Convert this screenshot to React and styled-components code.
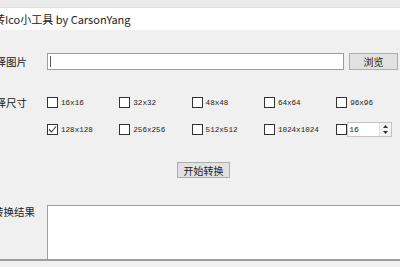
import React from "react";
import styled, { createGlobalStyle } from "styled-components";

const CJK = `"Noto Sans CJK SC", "Noto Sans", sans-serif`;

const GlobalStyle = createGlobalStyle`
  html, body {
    margin: 0;
    padding: 0;
    background: #f0f0f0;
    overflow: hidden;
  }
`;

const Window = styled.div`
  width: 400px;
  height: 267px;
  overflow: hidden;
  display: flex;
  flex-direction: column;
  background: #f0f0f0;
  font-family: ${CJK};
  color: #1a1a1a;
`;

const TopStrip = styled.div`
  height: 7px;
  background: #ebebeb;
  border-bottom: 1px solid #dedede;
`;

const TitleBar = styled.div`
  height: 22px;
  background: #ffffff;
  display: flex;
  align-items: center;
  font-size: 11px;
  white-space: nowrap;
  color: #222;
  span {
    margin-left: -6px;
  }
`;

const Body = styled.div`
  flex: 1;
  display: flex;
  flex-direction: column;
  padding-top: 23px;
`;

const Row = styled.div`
  display: grid;
  grid-template-columns: 47px 1fr;
  align-items: ${(p) => p.$align || "center"};
  margin-top: ${(p) => p.$top || 0}px;
`;

const Label = styled.div`
  font-size: 10.5px;
  line-height: 13px;
  white-space: nowrap;
  margin-left: ${(p) => p.$shift}px;
  margin-top: ${(p) => p.$dy || 0}px;
`;

const FileLine = styled.div`
  display: flex;
  gap: 5px;
  height: 17px;
`;

const TextInput = styled.div`
  width: 297px;
  box-sizing: border-box;
  border: 1px solid #74a6d2;
  background: #fff;
  display: flex;
  align-items: center;
  padding-left: 2px;
`;

const Caret = styled.div`
  width: 1px;
  height: 11px;
  background: #555;
`;

const Button = styled.div`
  box-sizing: border-box;
  width: ${(p) => p.$w}px;
  height: ${(p) => p.$h || 17}px;
  background: #e1e1e1;
  border: 1px solid #adadad;
  font-size: 10px;
  display: flex;
  align-items: center;
  justify-content: center;
  color: #222;
`;

const SizeGrid = styled.div`
  display: grid;
  grid-template-columns: repeat(5, 72.3px);
  grid-auto-rows: 15px;
  row-gap: 12px;
`;

const Option = styled.div`
  display: flex;
  align-items: center;
  gap: 3px;
  font-family: "Liberation Mono", monospace;
  font-size: 7.6px;
  color: #222;
`;

const Box = styled.div`
  width: 11px;
  height: 11px;
  box-sizing: border-box;
  border: 1px solid #333;
  background: #fff;
  display: flex;
  align-items: center;
  justify-content: center;
  flex-shrink: 0;
`;

const Spinner = styled.div`
  margin-left: -3px;
  width: 45px;
  height: 15px;
  box-sizing: border-box;
  border: 1px solid #c4c4c4;
  background: #fff;
  display: flex;
  align-items: center;
  font-size: 8px;
  font-family: "Liberation Mono", monospace;
  color: #222;
  padding-left: 1px;
`;

const SpinValue = styled.div`
  flex: 1;
`;

const SpinArrows = styled.div`
  width: 11px;
  height: 13px;
  display: flex;
  flex-direction: column;
  border-left: 1px solid #e0e0e0;
  background: #f3f3f3;
`;

const Arrow = styled.div`
  flex: 1;
  display: flex;
  align-items: center;
  justify-content: center;
`;

const ActionRow = styled.div`
  display: flex;
  padding-left: 177px;
  margin-top: 25px;
`;

const ResultBox = styled.div`
  height: 53px;
  background: #fff;
  border-top: 1px solid #a0a0a0;
  border-left: 1px solid #a0a0a0;
`;

const BottomEdge = styled.div`
  height: 2px;
  background: #9c9c9c;
`;

const sizes = [
  "16x16",
  "32x32",
  "48x48",
  "64x64",
  "96x96",
  "128x128",
  "256x256",
  "512x512",
  "1024x1024",
];

const Check = () => (
  <svg width="9" height="9" viewBox="0 0 9 9">
    <path d="M1 4.5 L3.5 7 L8 1.5" fill="none" stroke="#333" strokeWidth="1.1" />
  </svg>
);

const Tri = ({ up }) => (
  <svg width="5" height="3" viewBox="0 0 5 3">
    <path d={up ? "M0 3 L2.5 0 L5 3 Z" : "M0 0 L2.5 3 L5 0 Z"} fill="#333" />
  </svg>
);

export default function App() {
  return (
    <>
      <GlobalStyle />
      <Window>
        <TopStrip />
        <TitleBar>
          <span>转Ico小工具 by CarsonYang</span>
        </TitleBar>
        <Body>
          <Row>
            <Label $shift={-15}>选择图片</Label>
            <FileLine>
              <TextInput>
                <Caret />
              </TextInput>
              <Button $w={49}>浏览</Button>
            </FileLine>
          </Row>
          <Row $top={25} $align="start">
            <Label $shift={-15} $dy={1}>选择尺寸</Label>
            <SizeGrid>
              {sizes.map((s) => (
                <Option key={s}>
                  <Box>{s === "128x128" && <Check />}</Box>
                  {s}
                </Option>
              ))}
              <Option>
                <Box />
                <Spinner>
                  <SpinValue>16</SpinValue>
                  <SpinArrows>
                    <Arrow>
                      <Tri up />
                    </Arrow>
                    <Arrow>
                      <Tri />
                    </Arrow>
                  </SpinArrows>
                </Spinner>
              </Option>
            </SizeGrid>
          </Row>
          <ActionRow>
            <Button $w={53} $h={16}>开始转换</Button>
          </ActionRow>
          <Row $top={27} $align="start">
            <Label $shift={-7}>转换结果</Label>
            <ResultBox />
          </Row>
          <BottomEdge />
        </Body>
      </Window>
    </>
  );
}
